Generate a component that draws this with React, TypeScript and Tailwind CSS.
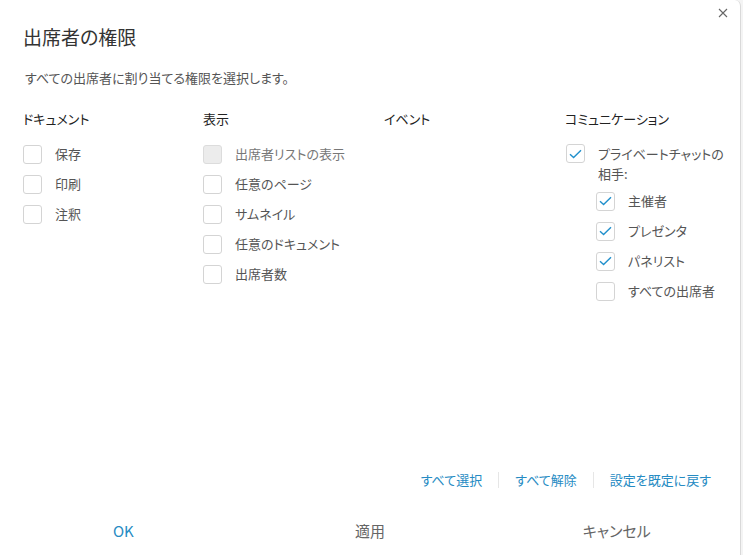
import React from "react";

type Item = { label: string; checked?: boolean; disabled?: boolean };

const font = { fontFamily: '"Noto Sans CJK JP", "Noto Sans", sans-serif' };

function Box({ checked, disabled }: { checked?: boolean; disabled?: boolean }) {
  return (
    <span
      className={`flex h-[19px] w-[19px] shrink-0 items-center justify-center rounded-[3px] border ${
        disabled ? "border-[#dcdcdc] bg-[#ececec]" : "border-[#d4d4d4] bg-white"
      }`}
    >
      {checked && (
        <svg width="13" height="10" viewBox="0 0 13 10" fill="none">
          <path d="M1 5.2 L4.6 8.6 L12 1.2" stroke="#2190cc" strokeWidth="1.4" />
        </svg>
      )}
    </span>
  );
}

function Row({ item }: { item: Item }) {
  return (
    <div className="flex h-[30px] items-center">
      <Box checked={item.checked} disabled={item.disabled} />
      <span className={`ml-[13px] whitespace-nowrap text-[13px] ${item.disabled ? "text-[#777]" : "text-[#555]"}`}>
        {item.label}
      </span>
    </div>
  );
}

export default function App() {
  const columns: { title: string; items: Item[] }[] = [
    { title: "ドキュメント", items: [{ label: "保存" }, { label: "印刷" }, { label: "注釈" }] },
    {
      title: "表示",
      items: [
        { label: "出席者リストの表示", disabled: true },
        { label: "任意のページ" },
        { label: "サムネイル" },
        { label: "任意のドキュメント" },
        { label: "出席者数" },
      ],
    },
    { title: "イベント", items: [] },
  ];

  const chatWith: Item[] = [
    { label: "主催者", checked: true },
    { label: "プレゼンタ", checked: true },
    { label: "パネリスト", checked: true },
    { label: "すべての出席者" },
  ];

  return (
    <div className="h-[555px] w-[743px] bg-[#f4f4f4] [font-feature-settings:'palt']" style={font}>
      <div className="relative flex h-[555px] w-[741px] flex-col rounded-tr-[6px] border-r border-[#d9d9d9] bg-white">
        <button className="absolute right-[12px] top-[8px] p-0">
          <svg width="10" height="10" viewBox="0 0 10 10">
            <path d="M1 1 L9 9 M9 1 L1 9" stroke="#666" strokeWidth="1.1" />
          </svg>
        </button>

        <h1 className="px-[23px] pt-[24px] text-[19px] font-normal leading-[26px] text-[#333]">出席者の権限</h1>
        <p className="mt-[19px] px-[25px] text-[13px] leading-[18px] text-[#555]">
          すべての出席者に割り当てる権限を選択します。
        </p>

        <div className="mt-[23px] grid grid-cols-[180px_181px_181px_1fr] pl-[23px]">
          {columns.map((col) => (
            <div key={col.title}>
              <div className="text-[13px] leading-[18px] text-[#222]">{col.title}</div>
              <div className="mt-[11px]">
                {col.items.map((it) => (
                  <Row key={it.label} item={it} />
                ))}
              </div>
            </div>
          ))}
          <div>
            <div className="text-[13px] leading-[18px] text-[#222]">コミュニケーション</div>
            <div className="mt-[16px] flex items-start pl-[1px]">
              <Box checked />
              <span className="ml-[13px] whitespace-nowrap text-[13px] leading-[20px] text-[#555]">
                プライベートチャットの
                <br />
                相手:
              </span>
            </div>
            <div className="mt-[2px] pl-[31px]">
              {chatWith.map((it) => (
                <Row key={it.label} item={it} />
              ))}
            </div>
          </div>
        </div>

        <div className="flex-1" />

        <div className="flex h-[30px] items-center justify-end pr-[29px] text-[13px] text-[#268bc3]">
          <button>すべて選択</button>
          <span className="mx-[16px] h-[16px] w-px bg-[#e6e6e6]" />
          <button>すべて解除</button>
          <span className="mx-[16px] h-[16px] w-px bg-[#e6e6e6]" />
          <button>設定を既定に戻す</button>
        </div>

        <div className="mt-[12px] grid h-[48px] grid-cols-3 text-[15px]">
          <button className="text-[#268bc3]">OK</button>
          <button className="text-[#666]">適用</button>
          <button className="text-[#666]">キャンセル</button>
        </div>
      </div>
    </div>
  );
}
